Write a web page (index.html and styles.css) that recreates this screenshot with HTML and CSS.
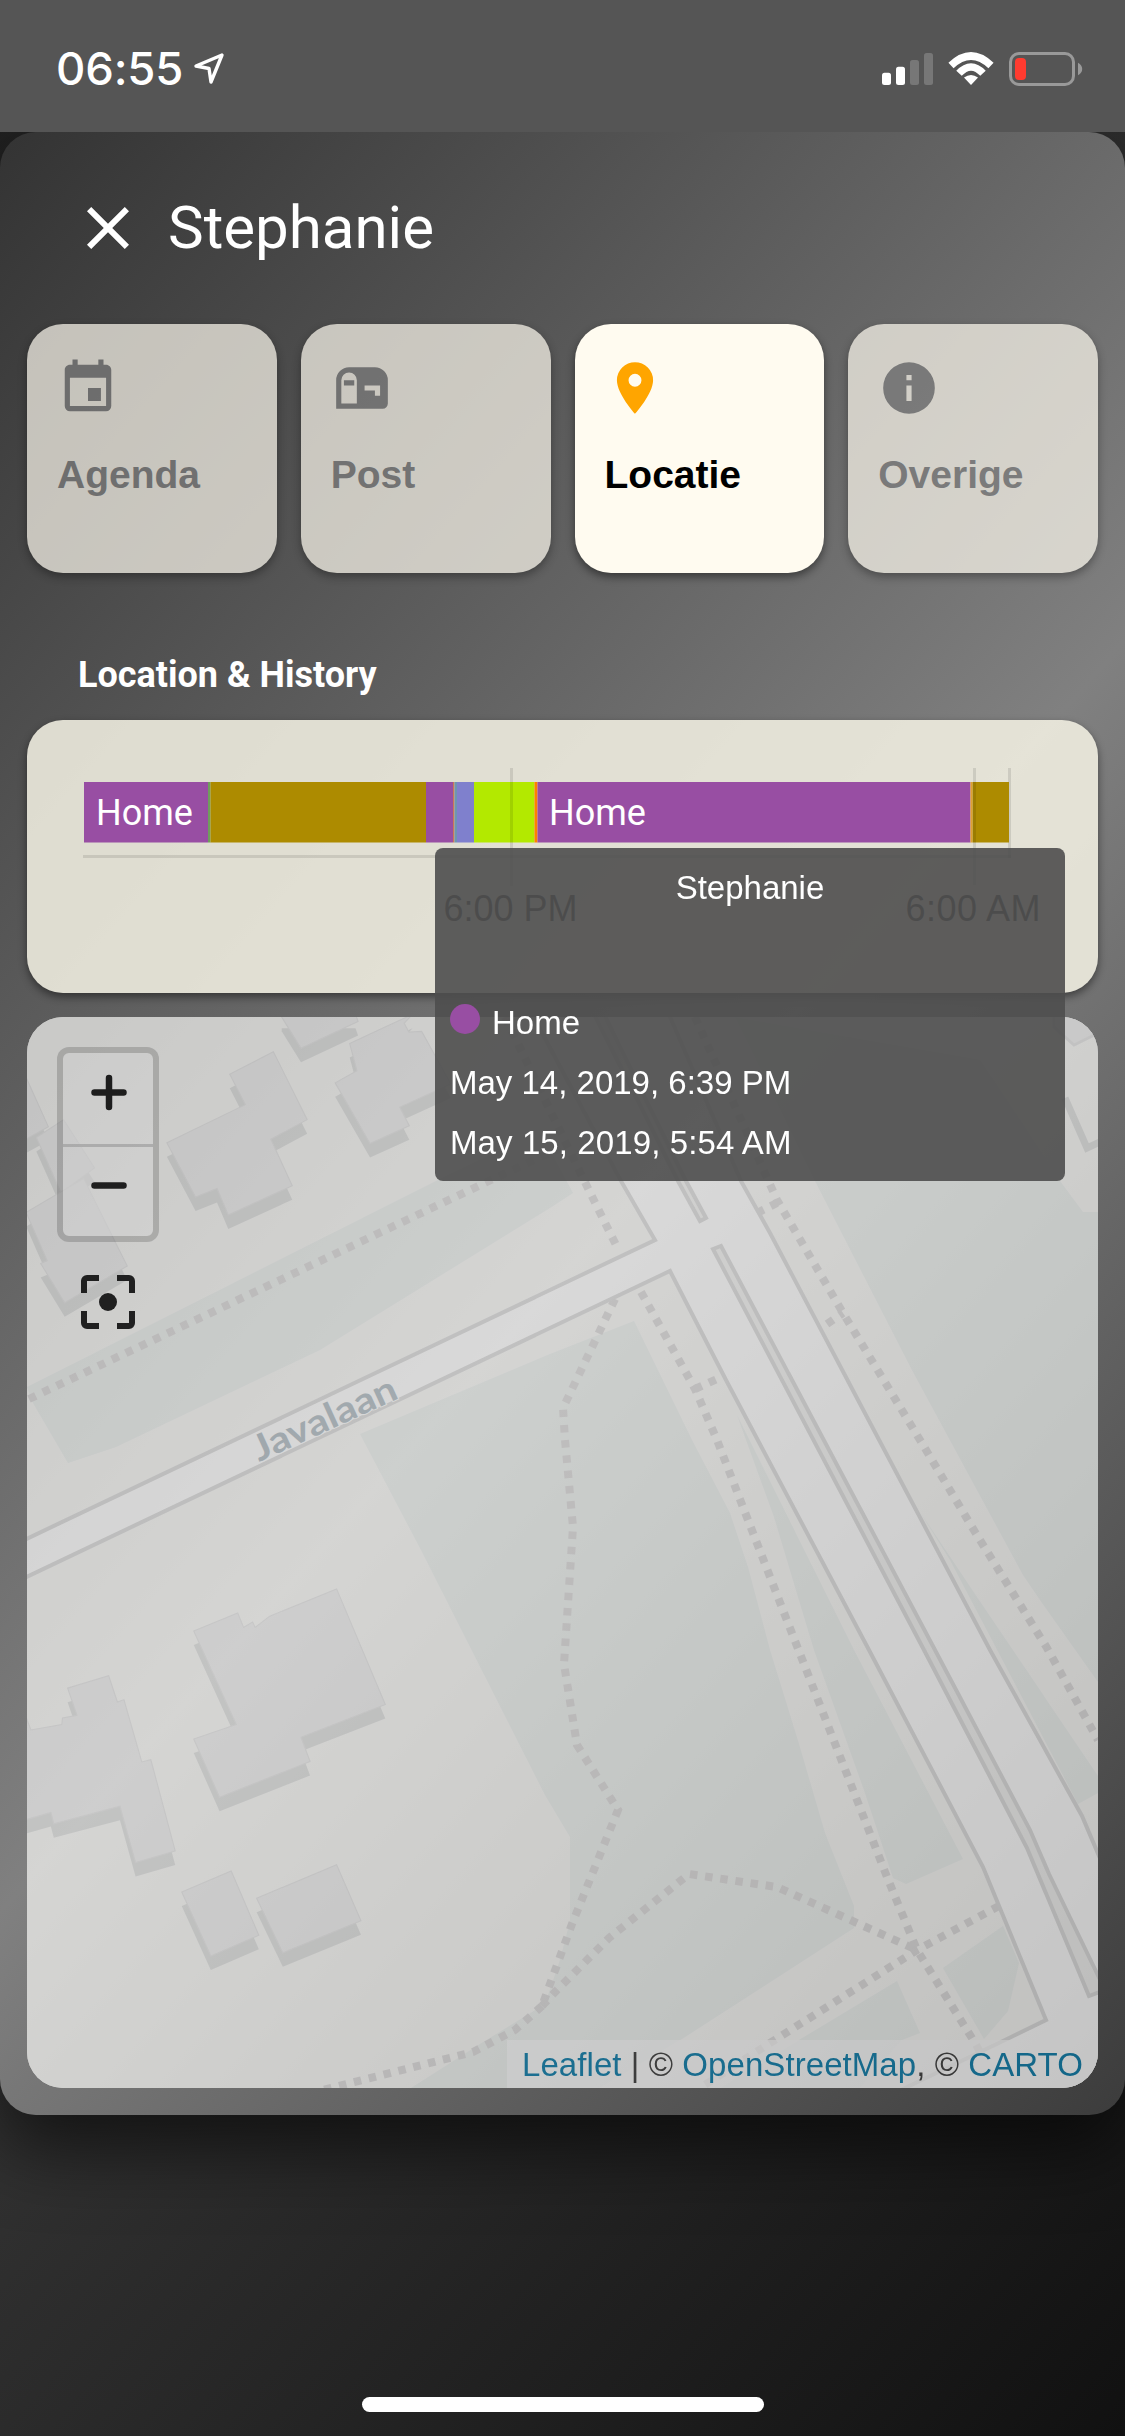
FILE: index.html
```html
<!DOCTYPE html>
<html lang="nl">
<head>
<meta charset="utf-8">
<title>Stephanie</title>
<link rel="stylesheet" href="styles.css">
</head>
<body>
<header class="status">
  <div class="status-left">
    <span class="clock">06:55</span>
    <svg class="nav-arrow" width="34" height="34" viewBox="0 0 34 34"><path d="M30 4L4 15L17 17.500L19 31Z"/></svg>
  </div>
  <svg class="status-icons" width="201" height="36" viewBox="882 51 201 36">
    <g fill="#fff">
      <rect x="882" y="72.700" width="9" height="12.300" rx="2.500"/>
      <rect x="896" y="66.700" width="9" height="18.300" rx="2.500"/>
      <rect x="910" y="60" width="9" height="25" rx="2.500" opacity=".2"/>
      <rect x="924" y="53" width="9" height="32" rx="2.500" opacity=".2"/>
      <path d="M971 85L964 77.500Q971 72.500 978 77.500Z"/>
    </g>
    <g fill="none" stroke="#fff">
      <path stroke-width="7.500" d="M951 65.500Q971 46.500 991 65.500"/>
      <path stroke-width="7.500" d="M959 73.300Q971 60.500 983 73.300"/>
    </g>
    <rect x="1010.500" y="53.500" width="63" height="31" rx="8.500" fill="none" stroke="#999" stroke-width="3"/>
    <rect x="1015" y="58" width="11" height="22" rx="4" fill="#ff3b30"/>
    <path d="M1078 62.700Q1082.200 65 1082.200 69T1078 75.300Z" fill="#999"/>
  </svg>
</header>

<main class="panel">
  <div class="title-row">
    <svg class="close" viewBox="0 0 24 24"><path d="M19,6.410L17.590,5L12,10.590L6.410,5L5,6.410L10.590,12L5,17.590L6.410,19L12,13.410L17.590,19L19,17.590L13.410,12L19,6.410Z"/></svg>
    <h1>Stephanie</h1>
  </div>

  <nav class="tabs">
    <div class="tab">
      <svg viewBox="0 0 24 24"><path d="M19,19H5V8H19M16,1V3H8V1H6V3H5C3.890,3 3,3.890 3,5V19A2,2 0 0,0 5,21H19A2,2 0 0,0 21,19V5C21,3.890 20.100,3 19,3H18V1M17,12H12V17H17V12Z"/></svg>
      <span>Agenda</span>
    </div>
    <div class="tab">
      <svg viewBox="0 0 24 24"><path fill-rule="evenodd" d="M17,4H7A5,5 0 0,0 2,9V20H20A2,2 0 0,0 22,18V9A5,5 0 0,0 17,4ZM10,18H4V9A3,3 0 0,1 10,9ZM19,15H17V13H13V11H19ZM9,11H5V9H9Z"/></svg>
      <span>Post</span>
    </div>
    <div class="tab active">
      <svg viewBox="0 0 24 24"><path d="M12,11.500A2.500,2.500 0 0,1 9.500,9A2.500,2.500 0 0,1 12,6.500A2.500,2.500 0 0,1 14.500,9A2.500,2.500 0 0,1 12,11.500M12,2A7,7 0 0,0 5,9C5,14.250 12,22 12,22C12,22 19,14.250 19,9A7,7 0 0,0 12,2Z"/></svg>
      <span>Locatie</span>
    </div>
    <div class="tab">
      <svg viewBox="0 0 24 24"><path d="M13,9H11V7H13M13,17H11V11H13M12,2A10,10 0 0,0 2,12A10,10 0 0,0 12,22A10,10 0 0,0 22,12A10,10 0 0,0 12,2Z"/></svg>
      <span>Overige</span>
    </div>
  </nav>

  <h2>Location &amp; History</h2>

  <section class="history">
    <svg class="chart" viewBox="27 720 1071 273">
      <g class="grid">
        <path d="M83 856.500H1011"/>
        <path d="M1009.500 768V858"/>
      </g>
      <rect x="84" y="782" width="124" height="60.500" fill="#984ea3"/>
      <rect x="208" y="782" width="2.500" height="60.500" fill="#6f9d5b"/>
      <rect x="210.500" y="782" width="215.500" height="60.500" fill="#ad8b00"/>
      <rect x="426" y="782" width="27" height="60.500" fill="#984ea3"/>
      <rect x="453" y="782" width="1.500" height="60.500" fill="#c87858"/>
      <rect x="454.500" y="782" width="2.500" height="60.500" fill="#6e96b0"/>
      <rect x="457" y="782" width="17" height="60.500" fill="#7f80cd"/>
      <rect x="474" y="782" width="60.500" height="60.500" fill="#b3e900"/>
      <rect x="534.500" y="782" width="3" height="60.500" fill="#ff7f00"/>
      <rect x="537.500" y="782" width="433" height="60.500" fill="#984ea3"/>
      <rect x="970.500" y="782" width="2" height="60.500" fill="#e0a030"/>
      <rect x="972.500" y="782" width="36.500" height="60.500" fill="#ad8b00"/>
      <g class="grid">
        <path d="M511.500 768V886"/>
        <path d="M974.500 768V885"/>
      </g>
      <text class="bar-label" x="96" y="825">Home</text>
      <text class="bar-label" x="549" y="825">Home</text>
      <text class="axis-label" x="510.500" y="921">6:00 PM</text>
      <text class="axis-label" x="973" y="921" textLength="135">6:00 AM</text>
    </svg>
    <aside class="tooltip">
      <p class="tip-title">Stephanie</p>
      <p class="tip-row"><i class="dot"></i>Home</p>
      <p class="tip-row">May 14, 2019, 6:39 PM</p>
      <p class="tip-row last">May 15, 2019, 5:54 AM</p>
    </aside>
  </section>

  <section class="map">
    <svg class="tiles" viewBox="27 1017 1071 1071">
      <defs>
        <g id="north" transform="translate(0 1000) scale(.3635 .3571)">
          <path d="M459 400L538 552L597 528L628 602L804 520L745 390L845 335L752 145L632 208L675 293Z"/>
          <path d="M775 48L828 135L985 60L978 40H775Z"/>
          <path d="M922 232L982 198L962 122L1040 85L1135 40L1112 65L1125 90L1160 88L1240 235L1100 300L1126 352L1018 402Z"/>
          <path d="M60 190L133 355L74 388H60Z"/>
          <path d="M100 385L175 335L260 470L168 540Z"/>
          <path d="M60 602L230 500L350 745L178 848L112 738L130 730L74 600Z"/>
        </g>
        <g id="south" transform="translate(0 1550) scale(.3635)">
          <path d="M533 223L654 173L670 213L695 198L702 213L742 182L926 107L1060 425L828 515L853 582L604 680L533 520L650 480Z"/>
          <path d="M186 380L299 346L323 418L341 412L390 583L415 577L482 828L373 860L330 705L148 753L140 722L60 745V430L85 495L170 480L172 462L212 455Z"/>
          <path d="M500 941L636 883L712 1060L580 1117Z"/>
          <path d="M706 958L926 866L993 1020L778 1108Z"/>
        </g>
      </defs>
      <rect x="27" y="1017" width="1071" height="1071" fill="#f9f9f7"/>
      <g class="park">
        <path d="M27 1387L436 1181L500 1150H550L573 1193L550 1208L320 1350L116 1447L68 1463L33 1403Z"/>
        <path d="M360 1434L550 1354L634 1321L692 1440L730 1513L748 1567L770 1650L799 1744L825 1833L854 1906V1928L682 2039L600 2088H411L480 2044L545 2004L560 1960L570 1921V1837L545 1795L421 1550Z"/>
        <path d="M737 1415L854 1650L963 1859L906 1884L893 1878L865 1793L814 1650L774 1517Z"/>
        <path d="M735 1017L815 1181L913 1372L1023 1575L1040 1600L1098 1682V1212H1083L1060 1181L980 1060Z"/>
        <path d="M920 1512L979 1600L1098 1776V1793L1078 1804L950 1560Z"/>
        <path d="M897 1981L920 2033L902 2040L860 2088H720L799 2040Z"/>
        <path d="M943 1968L1003 1926L1019 1963L1008 2011L984 2039Z"/>
      </g>
      <g class="shade"><use href="#north" y="14"/><use href="#south" y="14"/></g>
      <g class="building"><use href="#north"/><use href="#south"/>
        <path d="M1054 1010V1027L1074 1045L1098 1033V1010Z"/></g>
      <path d="M1065 1098L1087 1148L1100 1142" fill="none" stroke="#e0e1e0" stroke-width="7"/>
      <g class="trail">
        <path d="M29 1399L491 1180L560 1148"/>
        <path d="M505 1017L579 1170L616 1245"/>
        <path d="M695 1017L777 1200L843 1313L920 1440L975 1532L1047 1648L1098 1740"/>
        <path d="M757 1213L777 1203"/>
        <path d="M827 1324L843 1313"/>
        <path d="M641 1292L695 1389L717 1440L779 1600L887 1877L917 1950L975 2043L1000 2088"/>
        <path d="M695 1389L726 1375"/>
        <path d="M615 1299L563 1408L565 1440L573 1527L564 1664L577 1745L618 1810L572 1924L542 2006"/>
        <path d="M542 2006L515 2030L473 2052L323 2090"/>
        <path d="M542 2006L557 1990L609 1938L689 1874L777 1887L917 1950"/>
        <path d="M999 1906L917 1950L770 2043L700 2088"/>
      </g>
      <path class="road" d="M20 1542L550 1290L655 1240L621 1181L530 1010H667L741 1181L770 1233L858 1400L990 1650L1082 1816L1105 1870V2100H880L1005 2040L1046 2020L983 1867L869 1650L726 1380L670 1271L550 1328L20 1580Z"/>
      <path class="median" d="M592 1010L678 1181L700 1221L706 1218L686 1181L602 1010Z"/>
      <path class="median" d="M713 1249L721 1246L935 1650L1030 1830L1049 1874L1105 1990L1089 1996L1027 1848L986 1769L924 1650Z"/>
      <text class="street" transform="translate(259 1462) rotate(-24.500)" x="0" y="0" textLength="155" lengthAdjust="spacingAndGlyphs">Javalaan</text>
    </svg>
    <div class="map-controls">
      <div class="zoom">
        <div class="zoom-btn"><svg viewBox="0 0 90 90"><path d="M31.500 39.500H60.500M46 25V54"/></svg></div>
        <div class="zoom-btn"><svg viewBox="0 0 90 90"><path d="M31.500 38.500H60.500"/></svg></div>
      </div>
      <svg class="locate" viewBox="0 0 24 24"><path d="M5,15H3V19A2,2 0 0,0 5,21H9V19H5M5,5H9V3H5A2,2 0 0,0 3,5V9H5M19,3H15V5H19V9H21V5A2,2 0 0,0 19,3M19,19H15V21H19A2,2 0 0,0 21,19V15H19"/><circle cx="12" cy="12" r="3"/></svg>
    </div>
    <div class="credits"><a>Leaflet</a> | © <a>OpenStreetMap</a>, © <a>CARTO</a></div>
  </section>
</main>
<div class="home-bar"></div>
</body>
</html>
```
FILE: styles.css
```css
* { box-sizing: border-box; margin: 0; padding: 0; }

body {
  width: 1125px;
  height: 2436px;
  overflow: hidden;
  display: flex;
  flex-direction: column;
  align-items: center;
  background: linear-gradient(131.5deg, #1f1f1f 0%, #333 55%, #111 100%);
  font-family: "Liberation Sans", Arial, sans-serif;
}

svg { display: block; }

.status {
  position: relative;
  z-index: 1;
  width: 100%;
  height: 132px;
  flex: none;
  display: flex;
  justify-content: space-between;
  align-items: flex-start;
  padding: 51px 42px 0 56px;
  background: #555;
}
.status-left { display: flex; }
.clock {
  width: 133px;
  color: #fff;
  font: 500 45.5px/36px Inter, sans-serif;
  letter-spacing: -0.2px;
}
.nav-arrow { margin: 0 0 0 3px; fill: none; stroke: #fff; stroke-width: 3.4; stroke-linejoin: round; }

.panel {
  width: 100%;
  height: 1983px;
  flex: none;
  padding: 60px 27px 27px;
  border-radius: 36px;
  background: linear-gradient(131.5deg, #333 0%, #808080 54.7%, #3c3c3c 100%);
  box-shadow: 0 33px 72px rgba(0, 0, 0, .6);
}

.title-row { display: flex; align-items: center; height: 72px; padding-left: 45px; }
.close { width: 72px; height: 72px; fill: #fff; }
h1 { margin-left: 24px; color: #fff; font: 400 60px/72px Roboto, sans-serif; }

.tabs { display: grid; grid-template-columns: repeat(4, 1fr); gap: 24px; margin-top: 60px; }
.tab {
  height: 249px;
  padding: 33px 30px;
  border-radius: 36px;
  background: #fffbf0;
  opacity: .7;
  color: #808080;
  font-size: 39px;
  font-weight: bold;
  box-shadow: 0 4px 8px rgba(0, 0, 0, .45);
}
.tab svg { width: 62px; height: 62px; fill: #808080; }
.tab span { display: block; margin-top: 34px; line-height: 44px; }
.tab.active { opacity: 1; color: #000; }
.tab.active svg { margin-left: -1px; fill: orange; }

h2 { height: 147px; padding: 82px 0 0 51px; color: #fff; font: 700 36px/40px Roboto, sans-serif; }

.history {
  position: relative;
  z-index: 1;
  height: 273px;
  border-radius: 36px;
  background: rgba(243, 241, 227, .87);
  box-shadow: 0 4px 8px rgba(0, 0, 0, .45);
}
.chart { width: 1071px; height: 273px; }
.grid { fill: none; stroke: rgba(0, 0, 0, .1); stroke-width: 3; }
.bar-label { font: 36px Roboto, sans-serif; fill: #fff; }
.axis-label { font: 36px "Liberation Sans", sans-serif; fill: #444; text-anchor: middle; }

.tooltip {
  position: absolute;
  left: 408px;
  top: 128px;
  width: 630px;
  height: 333px;
  padding: 10px 15px;
  border-radius: 8px;
  background: rgba(78, 78, 78, .9);
  color: #fff;
  font-size: 33px;
}
.tip-title { height: 135px; line-height: 60px; text-align: center; }
.tip-row { display: flex; align-items: center; height: 60px; }
.tip-row.last { letter-spacing: .1px; }
.dot { width: 30px; height: 30px; margin: -8px 12px 0 0; border-radius: 50%; background: #984ea3; }

.map {
  height: 1071px;
  margin-top: 24px;
  border-radius: 36px;
  overflow: hidden;
  display: grid;
  opacity: .7;
  background: #f9f9f7;
}
.map > * { grid-area: 1 / 1; }
.tiles { width: 1071px; height: 1071px; }
.park { fill: #eef2f0; }
.shade { fill: #e0e1e0; }
.building { fill: #efefef; stroke: #e6e6e6; stroke-width: 3; }
.trail { fill: none; stroke: #dddbdb; stroke-width: 8; stroke-dasharray: 7.5 7.8; }
.road { fill: #fff; stroke: #ddd; stroke-width: 4; }
.median { fill: #f4f4f2; stroke: #ddd; stroke-width: 4; }
.street { font: 700 36px Lato, sans-serif; fill: #b2bdc5; stroke: #fff; stroke-width: 2; paint-order: stroke; }

.map-controls { padding: 30px; }
.zoom {
  width: 102px;
  height: 195px;
  border: 6px solid rgba(0, 0, 0, .2);
  border-radius: 12px;
  background: rgba(255, 255, 255, .55);
  background-clip: padding-box;
}
.zoom-btn { height: 91px; }
.zoom-btn + .zoom-btn { height: 92px; border-top: 3px solid #ccc; }
.zoom-btn svg { width: 90px; height: 90px; fill: none; stroke: #000; stroke-width: 6.5; stroke-linecap: round; }
.locate { width: 72px; height: 72px; margin: 24px 0 0 15px; }

.credits {
  align-self: end;
  justify-self: end;
  height: 48px;
  padding: 0 15px;
  background: rgba(255, 255, 255, .7);
  color: #333;
  font-size: 33px;
  line-height: 49px;
  letter-spacing: .07px;
  white-space: nowrap;
}
.credits a { color: #0078a8; }

.home-bar { flex: none; width: 402px; height: 15px; margin-top: 282px; border-radius: 8px; background: #fff; }
```
